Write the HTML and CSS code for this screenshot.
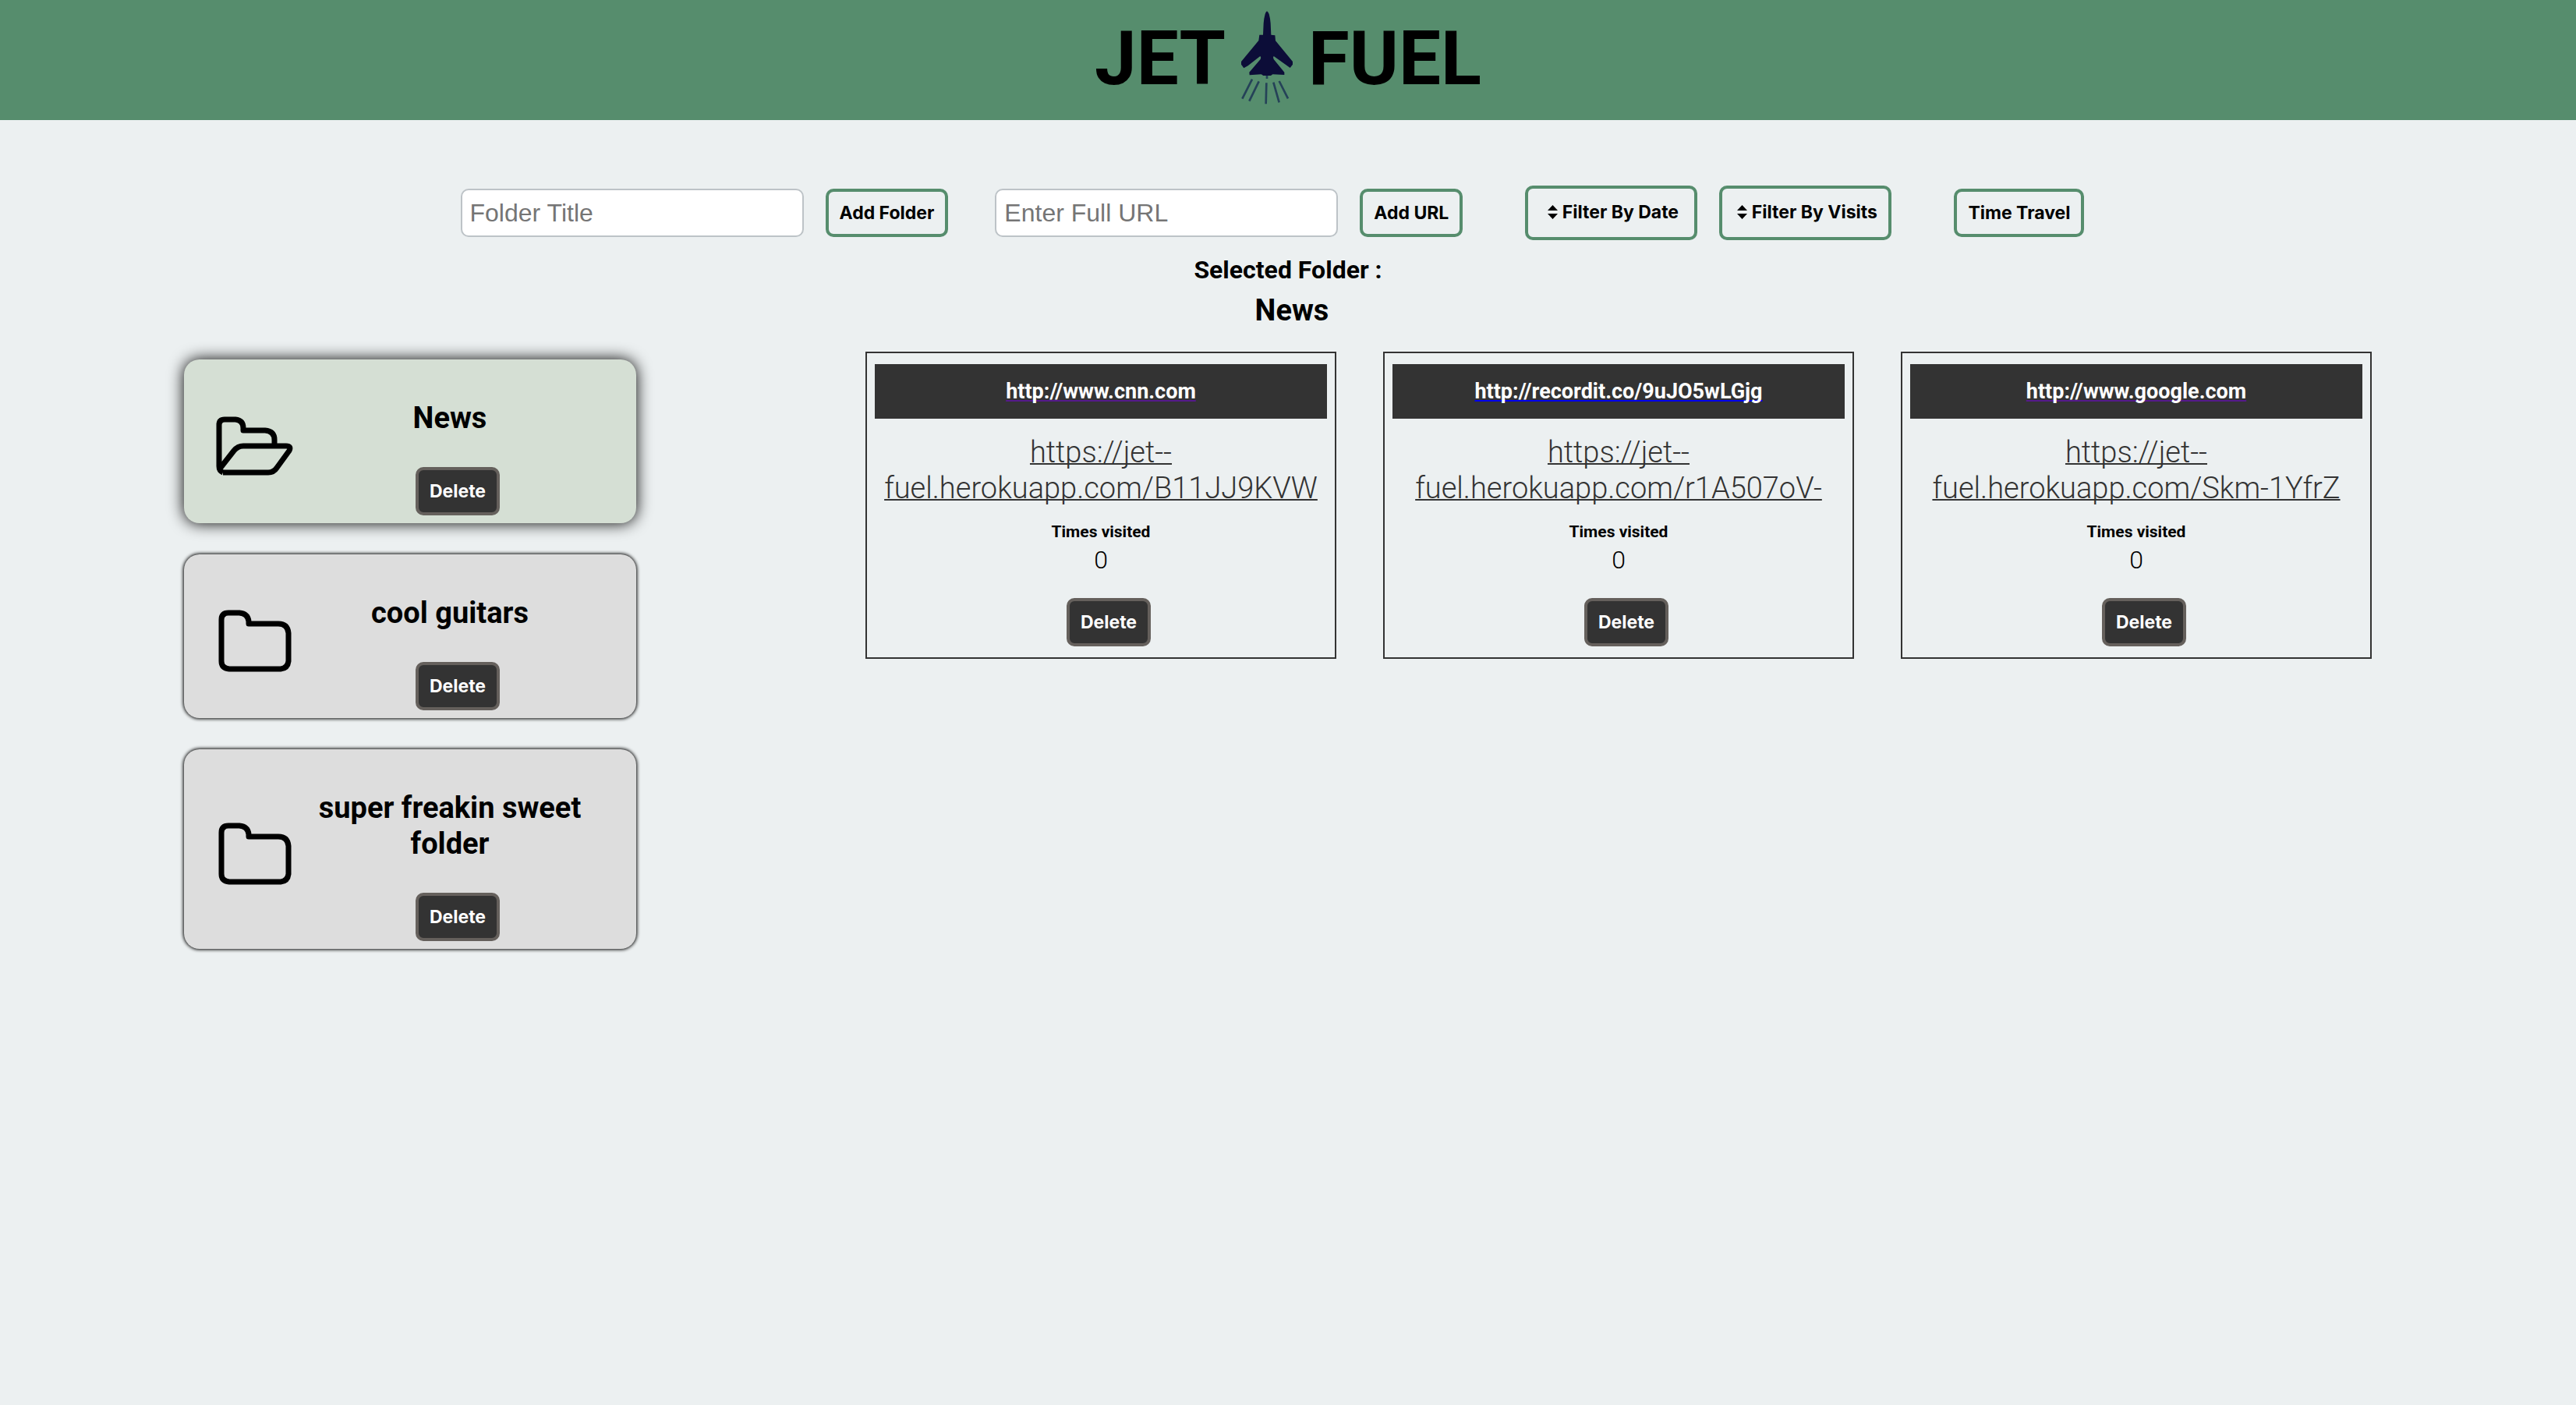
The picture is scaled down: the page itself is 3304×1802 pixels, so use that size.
FILE: index.html
```html
<!DOCTYPE html>
<html lang="en">
<head>
  <meta charset="utf-8">
  <meta name="viewport" content="width=device-width, initial-scale=1">
  <title>Jet Fuel</title>
  <link rel="stylesheet" href="styles.css">
</head>
<body>
  <header class="site-header">
    <h1 class="brand">
      <span>JET</span>
      <svg class="brand-jet" viewBox="66 42 198 360" aria-hidden="true">
        <path fill="#0c0d38" d="M165 43Q160 46 158 54Q153 72 152 90L150 134L136 134L133 156L66 237V248L76 262L92 253L139 216Q144 220 140 228L97 278L98 289L143 286L151 291H180L187 286L232 288V278L191 228Q187 220 191 216L254 261L264 248V237L198 157L196 136L181 134L179 90Q178 72 173 54Q170 46 165 43Z"/>
        <path fill="none" stroke="#254258" stroke-width="8" d="M108 305L70 380M134 313L97 389M163 319L161 400M190 317L212 394M212 312L246 379M165 291V303"/>
      </svg>
      <span>FUEL</span>
    </h1>
  </header>

  <section class="toolbar">
    <form class="group">
      <input class="field" type="text" placeholder="Folder Title" aria-label="Folder Title">
      <button class="btn" type="button">Add Folder</button>
    </form>
    <form class="group group-url">
      <input class="field" type="text" placeholder="Enter Full URL" aria-label="Enter Full URL">
      <button class="btn" type="button">Add URL</button>
    </form>
    <div class="group group-far">
      <button class="btn btn-filter" type="button">
        <svg class="sort" viewBox="0 0 13 18" aria-hidden="true"><path d="M6.500 0L13 7H0ZM0 11H13L6.500 18Z"/></svg>Filter By Date
      </button>
      <button class="btn btn-filter" type="button">
        <svg class="sort" viewBox="0 0 13 18" aria-hidden="true"><path d="M6.500 0L13 7H0ZM0 11H13L6.500 18Z"/></svg>Filter By Visits
      </button>
    </div>
    <div class="group group-far">
      <button class="btn" type="button">Time Travel</button>
    </div>
  </section>

  <section class="selected">
    <h2 class="selected-label">Selected Folder :</h2>
    <h3 class="selected-name">News</h3>
  </section>

  <main class="board">
    <section class="folders">
      <article class="folder folder-active">
        <svg class="folder-icon" viewBox="0 0 100 100" aria-hidden="true">
          <path d="M5 76V23Q5 16 12 16H26Q36 17 36 27V30H64Q76 31 76 42V50M10 84Q5 82 5 76M10 84H68Q75 84 79 78L95 56Q98 50 91 50H36Q29 50 24 56L6 79"/>
        </svg>
        <div class="folder-body">
          <h3 class="folder-title">News</h3>
          <button class="btn btn-delete" type="button">Delete</button>
        </div>
      </article>
      <article class="folder">
        <svg class="folder-icon" viewBox="0 0 100 100" aria-hidden="true">
          <path d="M8 76V23Q8 14 17 14H31Q42 15 43 25V28H81Q93 28 94 40V76Q93 85 84 86H18Q8 85 8 76Z"/>
        </svg>
        <div class="folder-body">
          <h3 class="folder-title">cool guitars</h3>
          <button class="btn btn-delete" type="button">Delete</button>
        </div>
      </article>
      <article class="folder">
        <svg class="folder-icon" viewBox="0 0 100 100" aria-hidden="true">
          <path d="M8 76V23Q8 14 17 14H31Q42 15 43 25V28H81Q93 28 94 40V76Q93 85 84 86H18Q8 85 8 76Z"/>
        </svg>
        <div class="folder-body">
          <h3 class="folder-title">super freakin sweet folder</h3>
          <button class="btn btn-delete" type="button">Delete</button>
        </div>
      </article>
    </section>

    <section class="links">
      <article class="link">
        <h4 class="link-head"><a class="origin origin-visited" href="#cnn">http://www.cnn.com</a></h4>
        <a class="short" href="#B11JJ9KVW">https://jet--<br>fuel.herokuapp.com/B11JJ9KVW</a>
        <h5 class="visits-label">Times visited</h5>
        <p class="visits">0</p>
        <button class="btn btn-delete" type="button">Delete</button>
      </article>
      <article class="link">
        <h4 class="link-head"><a class="origin" href="#recordit">http://recordit.co/9uJO5wLGjg</a></h4>
        <a class="short" href="#r1A507oV">https://jet--<br>fuel.herokuapp.com/r1A507oV-</a>
        <h5 class="visits-label">Times visited</h5>
        <p class="visits">0</p>
        <button class="btn btn-delete" type="button">Delete</button>
      </article>
      <article class="link">
        <h4 class="link-head"><a class="origin origin-visited" href="#google">http://www.google.com</a></h4>
        <a class="short" href="#Skm-1YfrZ">https://jet--<br>fuel.herokuapp.com/Skm-1YfrZ</a>
        <h5 class="visits-label">Times visited</h5>
        <p class="visits">0</p>
        <button class="btn btn-delete" type="button">Delete</button>
      </article>
    </section>
  </main>
</body>
</html>
```
FILE: styles.css
```css
* {
  box-sizing: border-box;
  margin: 0;
  padding: 0;
}

body {
  min-height: 100vh;
  background: #ecf0f1;
  color: #000;
  font-family: Roboto, "Liberation Sans", sans-serif;
  font-size: 32px;
  font-weight: 300;
}

/* Header */
.site-header {
  padding: 14px 0 20px;
  background: #568d6d;
}

.brand {
  display: flex;
  justify-content: center;
  gap: 20px;
  font-size: 96px;
  font-weight: 700;
  line-height: 122px;
}

.brand-jet {
  width: 66px;
  height: 120px;
}

.brand {
  height: 120px;
}

/* Toolbar */
.toolbar {
  display: flex;
  flex-wrap: wrap;
  align-items: center;
  justify-content: center;
  padding: 84px 40px 19px 0;
}

.group {
  display: flex;
  align-items: center;
  gap: 28px;
}

.group-url {
  margin-left: 60px;
}

.group-far {
  margin-left: 80px;
}

.field {
  width: 440px;
  height: 62px;
  padding: 0 10px;
  border: 2px solid #bdc3c7;
  border-radius: 10px;
  background: #fff;
  font-family: "Liberation Sans", Arial, sans-serif;
  font-size: 32px;
}

.field::placeholder {
  color: #757575;
}

.btn {
  height: 62px;
  padding: 0 14px;
  border: 4px solid #568d6d;
  border-radius: 10px;
  background: transparent;
  color: #000;
  font-family: Inter, Roboto, sans-serif;
  font-size: 23px;
  font-weight: 700;
}

.btn-filter {
  display: flex;
  align-items: center;
  justify-content: center;
  gap: 6px;
  width: 221px;
  height: 70px;
  padding: 0 0 2px 4px;
}

.sort {
  width: 13px;
  height: 18px;
}

.btn-delete {
  margin-left: 20px;
  border-color: #65605c;
  background: #333;
  color: #fff;
}

/* Selected folder */
.selected {
  text-align: center;
}

.selected-label {
  font-size: 32px;
  line-height: 38px;
}

.selected-name {
  margin: 10px 0 30px 10px;
  font-size: 38px;
  line-height: 46px;
}

/* Board */
.board {
  display: grid;
  grid-template-columns: 580px 1fr;
  gap: 294px;
  padding: 0 262px 60px 236px;
}

.folders {
  display: flex;
  flex-direction: column;
  gap: 40px;
  padding-top: 10px;
}

.folder {
  display: flex;
  align-items: center;
  gap: 26px;
  padding: 52px 64px 10px 40px;
  border-radius: 20px;
  background: #ddd;
  box-shadow: 0 0 4px 1px #000;
}

.folder-active {
  background: #d5dfd4;
  box-shadow: 0 0 20px #000;
}

.folder-icon {
  flex: none;
  width: 100px;
  height: 100px;
  margin-bottom: 30px;
  fill: none;
  stroke: #000;
  stroke-width: 7px;
  stroke-linejoin: round;
}

.folder-body {
  display: flex;
  flex: 1;
  flex-direction: column;
  align-items: center;
  text-align: center;
}

.folder-title {
  margin-bottom: 40px;
  font-size: 38px;
  line-height: 46px;
}

.links {
  display: flex;
  flex-wrap: wrap;
  align-content: flex-start;
  gap: 60px;
}

.link {
  display: flex;
  flex-direction: column;
  align-items: center;
  width: 604px;
  padding: 14px 10px;
  border: 2px solid #333;
  text-align: center;
}

.link-head {
  width: 100%;
  background: #333;
  font-size: 27px;
  line-height: 70px;
}

.origin {
  color: #fff;
  text-decoration-color: #00e;
  text-decoration-thickness: 2px;
  text-decoration-skip-ink: none;
  text-underline-offset: 2px;
}

.origin-visited {
  text-decoration-color: #551a8b;
}

.short {
  margin: 20px 0;
  color: #333;
  font-size: 38px;
  line-height: 46px;
  text-decoration-thickness: 2px;
  text-decoration-skip-ink: none;
}

.visits-label {
  font-size: 21px;
  line-height: 26px;
}

.visits {
  margin: 4px 0 30px;
  line-height: 38px;
}
```
